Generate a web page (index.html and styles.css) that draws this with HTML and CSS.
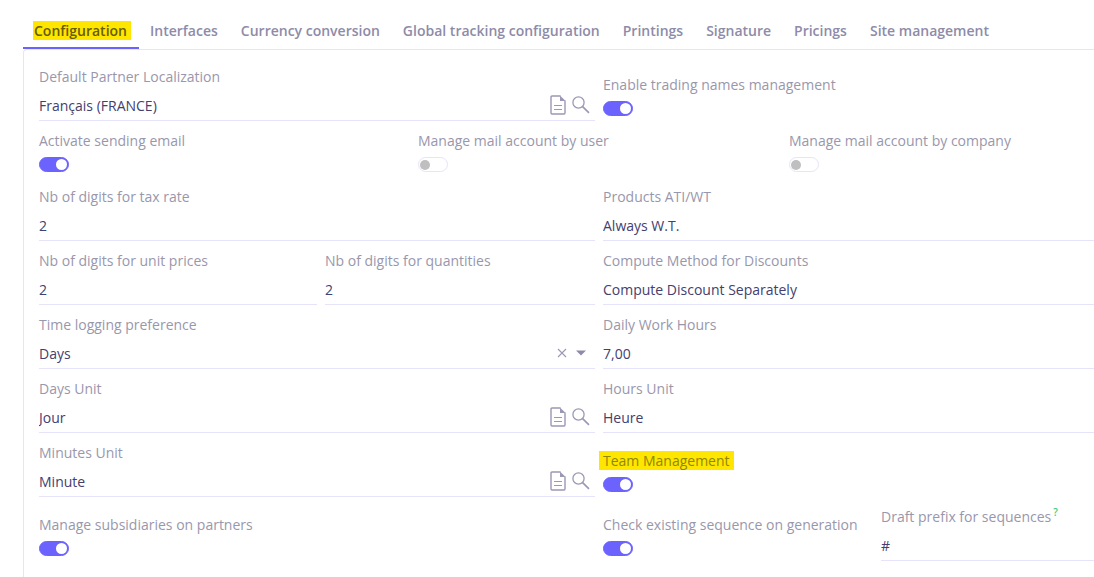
FILE: index.html
```html
<!DOCTYPE html>
<html lang="en">

<head>
    <meta charset="UTF-8">
    <meta name="viewport" content="width=device-width, initial-scale=1.0">
    <title>Base App Configuration</title>
    <link rel="stylesheet" href="styles.css">
</head>

<body>
    <!-- Icons shared by the reference fields -->
    <svg class="sprite" aria-hidden="true">
        <symbol id="icon-doc" viewBox="0 0 16 20">
            <path d="M10.5 1H2a1 1 0 0 0-1 1v16a1 1 0 0 0 1 1h12a1 1 0 0 0 1-1V5.5" fill="none" stroke="currentColor" stroke-width="1.4" />
            <path d="M10 .5V6h5.6z" fill="currentColor" />
            <path d="M4 10.5h8M4 14.5h8" stroke="currentColor" stroke-width="1.2" />
        </symbol>
        <symbol id="icon-search" viewBox="0 0 18 18">
            <circle cx="6.5" cy="6.5" r="5.6" fill="none" stroke="currentColor" stroke-width="1.3" />
            <path d="M10.6 10.6l6.4 6.2" stroke="currentColor" stroke-width="1.7" />
        </symbol>
    </svg>

    <div class="container">
        <nav class="tabs" role="tablist">
            <button type="button" class="tab active" role="tab" aria-selected="true"><mark>Configuration</mark></button>
            <button type="button" class="tab" role="tab">Interfaces</button>
            <button type="button" class="tab" role="tab">Currency conversion</button>
            <button type="button" class="tab" role="tab">Global tracking configuration</button>
            <button type="button" class="tab" role="tab">Printings</button>
            <button type="button" class="tab" role="tab">Signature</button>
            <button type="button" class="tab" role="tab">Pricings</button>
            <button type="button" class="tab" role="tab">Site management</button>
        </nav>

        <form class="panel">
            <!-- Localization -->
            <div class="row row-two">
                <div class="field">
                    <label for="localization">Default Partner Localization</label>
                    <div class="control">
                        <input type="text" id="localization" value="Français (FRANCE)">
                        <button type="button" class="icon-btn" aria-label="Open"><svg class="doc"><use href="#icon-doc" /></svg></button>
                        <button type="button" class="icon-btn" aria-label="Search"><svg class="search"><use href="#icon-search" /></svg></button>
                    </div>
                </div>
                <div class="field switch">
                    <label for="tradingNames">Enable trading names management</label>
                    <input type="checkbox" id="tradingNames" checked>
                </div>
            </div>

            <!-- Emails -->
            <div class="row row-three">
                <div class="field switch">
                    <label for="sendEmail">Activate sending email</label>
                    <input type="checkbox" id="sendEmail" checked>
                </div>
                <div class="field switch">
                    <label for="mailByUser">Manage mail account by user</label>
                    <input type="checkbox" id="mailByUser">
                </div>
                <div class="field switch">
                    <label for="mailByCompany">Manage mail account by company</label>
                    <input type="checkbox" id="mailByCompany">
                </div>
            </div>

            <!-- Prices and discounts -->
            <div class="row row-two">
                <div class="field">
                    <label for="taxDigits">Nb of digits for tax rate</label>
                    <div class="control"><input type="text" id="taxDigits" value="2"></div>
                </div>
                <div class="field">
                    <label for="productsAti">Products ATI/WT</label>
                    <div class="control">
                        <select id="productsAti">
                            <option>Always W.T.</option>
                        </select>
                    </div>
                </div>
            </div>
            <div class="row row-digits">
                <div class="field">
                    <label for="priceDigits">Nb of digits for unit prices</label>
                    <div class="control"><input type="text" id="priceDigits" value="2"></div>
                </div>
                <div class="field">
                    <label for="qtyDigits">Nb of digits for quantities</label>
                    <div class="control"><input type="text" id="qtyDigits" value="2"></div>
                </div>
                <div class="field">
                    <label for="discountMethod">Compute Method for Discounts</label>
                    <div class="control">
                        <select id="discountMethod">
                            <option>Compute Discount Separately</option>
                        </select>
                    </div>
                </div>
            </div>

            <!-- Time and units -->
            <div class="row row-two">
                <div class="field">
                    <label for="timeLogging">Time logging preference</label>
                    <div class="control">
                        <select id="timeLogging">
                            <option>Days</option>
                        </select>
                        <button type="button" class="icon-btn" aria-label="Clear">
                            <svg class="clear" viewBox="0 0 10 10"><path d="M1 1l8 8M9 1l-8 8" stroke="currentColor" stroke-width="1.1" /></svg>
                        </button>
                        <svg class="caret" viewBox="0 0 10 6" aria-hidden="true"><path d="M0 .5h10L5 5.5z" fill="currentColor" /></svg>
                    </div>
                </div>
                <div class="field">
                    <label for="workHours">Daily Work Hours</label>
                    <div class="control"><input type="text" id="workHours" value="7,00"></div>
                </div>
            </div>
            <div class="row row-two">
                <div class="field">
                    <label for="daysUnit">Days Unit</label>
                    <div class="control">
                        <input type="text" id="daysUnit" value="Jour">
                        <button type="button" class="icon-btn" aria-label="Open"><svg class="doc"><use href="#icon-doc" /></svg></button>
                        <button type="button" class="icon-btn" aria-label="Search"><svg class="search"><use href="#icon-search" /></svg></button>
                    </div>
                </div>
                <div class="field">
                    <label for="hoursUnit">Hours Unit</label>
                    <div class="control"><input type="text" id="hoursUnit" value="Heure"></div>
                </div>
            </div>
            <div class="row row-two">
                <div class="field">
                    <label for="minutesUnit">Minutes Unit</label>
                    <div class="control">
                        <input type="text" id="minutesUnit" value="Minute">
                        <button type="button" class="icon-btn" aria-label="Open"><svg class="doc"><use href="#icon-doc" /></svg></button>
                        <button type="button" class="icon-btn" aria-label="Search"><svg class="search"><use href="#icon-search" /></svg></button>
                    </div>
                </div>
                <div class="field switch">
                    <label for="teamManagement"><mark>Team Management</mark></label>
                    <input type="checkbox" id="teamManagement" checked>
                </div>
            </div>

            <!-- Subsidiaries and sequences -->
            <div class="row row-sequence">
                <div class="field switch">
                    <label for="subsidiaries">Manage subsidiaries on partners</label>
                    <input type="checkbox" id="subsidiaries" checked>
                </div>
                <div class="field switch">
                    <label for="checkSequence">Check existing sequence on generation</label>
                    <input type="checkbox" id="checkSequence" checked>
                </div>
                <div class="field">
                    <label for="draftPrefix">Draft prefix for sequences<sup class="help">?</sup></label>
                    <div class="control"><input type="text" id="draftPrefix" value="#"></div>
                </div>
            </div>
        </form>
    </div>
</body>

</html>
```
FILE: styles.css
```css
* {
    box-sizing: border-box;
}

body {
    margin: 0;
    background-color: #fff;
    color: #43406f;
    font-family: "Open Sans", "Noto Sans", sans-serif;
    font-size: 14px;
}

button,
input,
select {
    font: inherit;
    color: inherit;
    margin: 0;
    padding: 0;
    border: none;
    border-radius: 0;
    background: none;
}

.sprite {
    display: none;
}

.container {
    padding: 12px 0 0 23px;
}

/* Tabs */
.tabs {
    display: flex;
}

.tab {
    height: 37px;
    padding: 2px 12px 0 11px;
    color: #8e8ba9;
    font-weight: 600;
    white-space: nowrap;
    border-bottom: 2px solid transparent;
    cursor: pointer;
}

.tab.active {
    border-bottom-color: #6c63ff;
}

mark {
    margin: 0 -4px;
    padding: 0 4px;
    background-color: #ffe600;
    color: #8f8700;
}

.tab mark {
    margin-left: -1px;
    padding-left: 1px;
    color: #665d00;
}

/* Form panel */
.panel {
    display: flex;
    flex-direction: column;
    gap: 8px;
    padding: 15px 0 16px 15px;
    border-top: 1px solid #e6e4fa;
    border-left: 1px solid #e6e4fa;
    border-top-left-radius: 4px;
}

.row {
    display: grid;
    column-gap: 8px;
    align-items: end;
}

.row-two {
    grid-template-columns: minmax(0, 556fr) minmax(0, 491fr);
}

.row-three {
    grid-template-columns: minmax(0, 371fr) minmax(0, 363fr) minmax(0, 305fr);
}

.row-digits {
    grid-template-columns: minmax(0, 278fr) minmax(0, 270fr) minmax(0, 491fr);
}

.row-sequence {
    grid-template-columns: minmax(0, 556fr) minmax(0, 270fr) minmax(0, 213fr);
}

.field {
    display: flex;
    flex-direction: column;
}

.field label {
    align-self: flex-start;
    color: #9997ac;
    line-height: 24px;
    white-space: nowrap;
}

.help {
    margin-left: 2px;
    color: #3ccb7f;
    font-size: 10px;
    font-weight: 600;
    line-height: 0;
}

.control {
    display: flex;
    align-items: center;
    height: 32px;
    border-bottom: 1px solid #e6e4fa;
}

.control input,
.control select {
    flex: 1;
    min-width: 0;
    height: 31px;
    padding-top: 2px;
    appearance: none;
    outline: none;
}

.icon-btn {
    display: flex;
    color: #9a98b4;
    cursor: pointer;
}

.icon-btn + .icon-btn {
    margin: 0 5px 0 6px;
}

.doc {
    width: 16px;
    height: 20px;
}

.search {
    width: 18px;
    height: 18px;
}

.clear {
    width: 10px;
    height: 10px;
}

.caret {
    width: 10px;
    height: 6px;
    margin: 0 9px;
    color: #8e8ba9;
}

/* Toggle switches */
.switch {
    gap: 4px;
    padding-bottom: 5px;
}

.switch input {
    display: flex;
    align-items: center;
    width: 30px;
    height: 15px;
    padding: 0 1px;
    border: 1px solid #e6e4fa;
    border-radius: 8px;
    appearance: none;
    cursor: pointer;
}

.switch input::before {
    content: "";
    width: 10px;
    height: 10px;
    border-radius: 50%;
    background-color: #bfbfbf;
}

.switch input:checked {
    justify-content: flex-end;
    border-color: #6c63ff;
    background-color: #6c63ff;
}

.switch input:checked::before {
    width: 11px;
    height: 11px;
    background-color: #fff;
}
```
